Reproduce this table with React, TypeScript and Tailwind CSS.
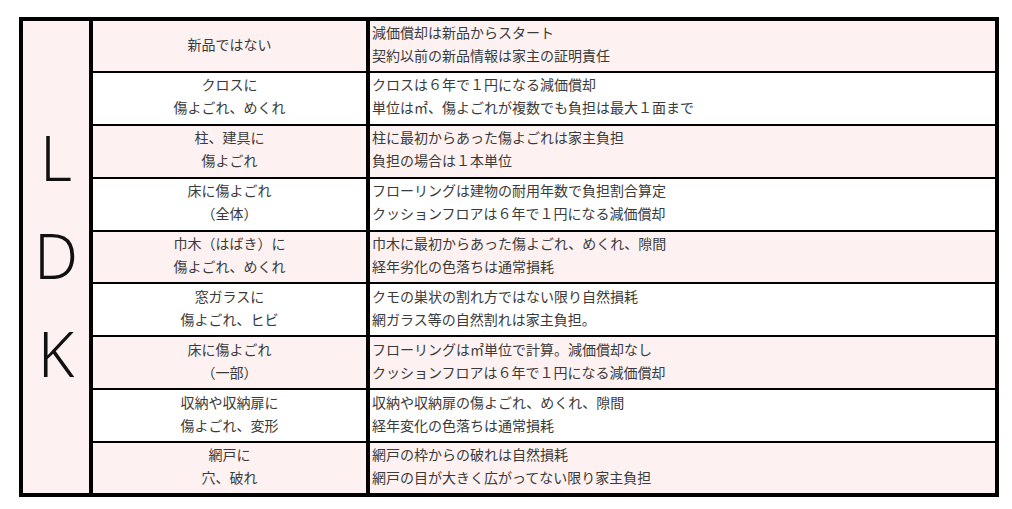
const rows: [string[], string[]][] = [
  [['新品ではない'], ['減価償却は新品からスタート', '契約以前の新品情報は家主の証明責任']],
  [['クロスに', '傷よごれ、めくれ'], ['クロスは６年で１円になる減価償却', '単位は㎡、傷よごれが複数でも負担は最大１面まで']],
  [['柱、建具に', '傷よごれ'], ['柱に最初からあった傷よごれは家主負担', '負担の場合は１本単位']],
  [['床に傷よごれ', '（全体）'], ['フローリングは建物の耐用年数で負担割合算定', 'クッションフロアは６年で１円になる減価償却']],
  [['巾木（はばき）に', '傷よごれ、めくれ'], ['巾木に最初からあった傷よごれ、めくれ、隙間', '経年劣化の色落ちは通常損耗']],
  [['窓ガラスに', '傷よごれ、ヒビ'], ['クモの巣状の割れ方ではない限り自然損耗', '網ガラス等の自然割れは家主負担。']],
  [['床に傷よごれ', '（一部）'], ['フローリングは㎡単位で計算。減価償却なし', 'クッションフロアは６年で１円になる減価償却']],
  [['収納や収納扉に', '傷よごれ、変形'], ['収納や収納扉の傷よごれ、めくれ、隙間', '経年変化の色落ちは通常損耗']],
  [['網戸に', '穴、破れ'], ['網戸の枠からの破れは自然損耗', '網戸の目が大きく広がってない限り家主負担']],
];

export default function App() {
  return (
    <div
      className="w-[1012px] h-[509px] bg-white pt-[17px] pl-[19px] text-[#3a3a3a]"
      style={{ fontFamily: '"Noto Sans CJK JP", "Noto Sans", sans-serif' }}
    >
      <div className="w-[980px] h-[480px] border-4 border-black flex">
        {/* LDK column */}
        <div className="w-[70px] border-r-4 border-black bg-[#fdf2f1] flex flex-col items-center justify-center pb-[4px]">
          {['L', 'D', 'K'].map((c) => (
            <div
              key={c}
              className="text-[62px] leading-[98px] font-light text-[#111]"
              style={{ fontFamily: '"Noto Sans", "Open Sans", sans-serif' }}
            >
              {c}
            </div>
          ))}
        </div>

        {/* Rows */}
        <div className="flex-1 flex flex-col">
          {rows.map(([item, note], i) => (
            <div
              key={i}
              className={`flex ${
                i === 0 ? 'h-[50px]' : i === 8 ? 'flex-1 border-t-2 border-black' : 'h-[53px] border-t-2 border-black'
              } ${i % 2 === 0 ? 'bg-[#fdf2f1]' : 'bg-white'}`}
            >
              <div className="w-[277px] border-r-4 border-black flex flex-col items-center justify-center pb-[4px] text-[14px] leading-[23px]">
                {item.map((t) => (
                  <div key={t}>{t}</div>
                ))}
              </div>
              <div className="flex-1 pl-[2px] flex flex-col justify-center pb-[4px] text-[14px] leading-[23px]">
                {note.map((t) => (
                  <div key={t}>{t}</div>
                ))}
              </div>
            </div>
          ))}
        </div>
      </div>
    </div>
  );
}
